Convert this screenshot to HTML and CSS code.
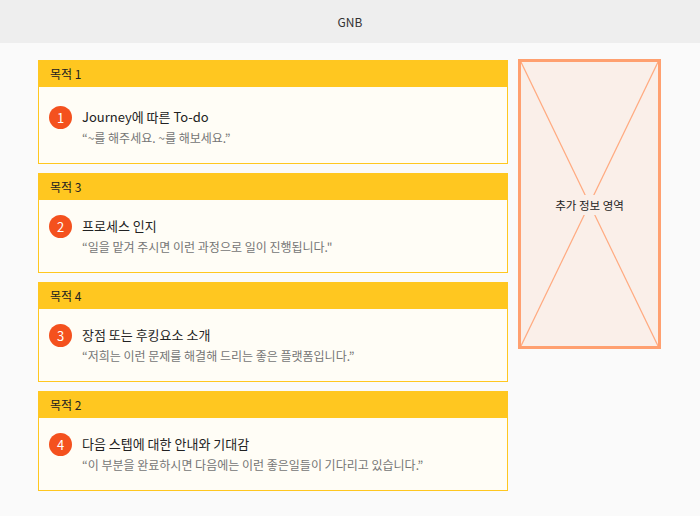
FILE: index.html
```html
<!DOCTYPE html>
<html>
<head>
    <title>Journey</title>
    <link rel="stylesheet" href="styles.css">
</head>
<body>
    <div class="gnb">GNB</div>

    <div class="container">
        <div class="list">
            <div class="card first">
                <div class="card-head">목적 1</div>
                <div class="card-body">
                    <span class="num">1</span>
                    <div class="text">
                        <div class="title">Journey에 따른 To-do</div>
                        <div class="desc">“~를 해주세요. ~를 해보세요.”</div>
                    </div>
                </div>
            </div>
            <div class="card">
                <div class="card-head">목적 3</div>
                <div class="card-body">
                    <span class="num">2</span>
                    <div class="text">
                        <div class="title">프로세스 인지</div>
                        <div class="desc">“일을 맡겨 주시면 이런 과정으로 일이 진행됩니다."</div>
                    </div>
                </div>
            </div>
            <div class="card">
                <div class="card-head">목적 4</div>
                <div class="card-body">
                    <span class="num">3</span>
                    <div class="text">
                        <div class="title">장점 또는 후킹요소 소개</div>
                        <div class="desc">“저희는 이런 문제를 해결해 드리는 좋은 플랫폼입니다.”</div>
                    </div>
                </div>
            </div>
            <div class="card">
                <div class="card-head">목적 2</div>
                <div class="card-body">
                    <span class="num">4</span>
                    <div class="text">
                        <div class="title">다음 스텝에 대한 안내와 기대감</div>
                        <div class="desc">“이 부분을 완료하시면 다음에는 이런 좋은일들이 기다리고 있습니다.”</div>
                    </div>
                </div>
            </div>
        </div>

        <div class="side">
            <svg class="cross" viewBox="0 0 100 100" preserveAspectRatio="none">
                <line x1="0" y1="0" x2="100" y2="100" />
                <line x1="100" y1="0" x2="0" y2="100" />
            </svg>
            <span class="side-label">추가 정보 영역</span>
        </div>
    </div>
</body>
</html>
```

FILE: styles.css
```css
body { margin: 0; background: #fafafa; font-family: "Noto Sans CJK KR", "Noto Sans", sans-serif; color: #222; }

.gnb { height: 43px; line-height: 43px; background: #eeeeee; text-align: center; font-size: 12px; color: #333; }

.container { display: flex; align-items: flex-start; gap: 10px; padding: 17px 0 0 38px; }
.list { width: 470px; display: flex; flex-direction: column; gap: 9px; }

.card { border: 1px solid #ffc720; border-top: none; background: #fffdf6; }
.card-head { height: 27px; line-height: 27px; background: #ffc720; padding: 0 12px; font-size: 12px; margin: 0 -1px; }
.card-body { display: flex; align-items: flex-start; gap: 10px; padding: 15px 10px 15px; }
.card.first .card-body { padding-top: 19px; }

.num { flex: none; width: 23px; height: 23px; border-radius: 50%; background: #f4511e; color: #fff; font-size: 13px; line-height: 23px; text-align: center; }
.text { margin-top: 1px; }
.title { font-size: 13px; line-height: 20px; }
.desc { font-size: 12px; line-height: 20px; margin-top: 1px; color: #757575; }

.side { position: relative; width: 137px; height: 284px; border: 3px solid #ffa070; background: #faefe9; display: flex; align-items: center; justify-content: center; margin-top: -1px; }
.cross { position: absolute; top: 0; left: 0; width: 100%; height: 100%; }
.cross line { stroke: #ffaa80; stroke-width: 1.2; vector-effect: non-scaling-stroke; }
.side-label { position: relative; background: #faefe9; font-size: 11.5px; padding: 2px 3px; margin-top: 1px; color: #222; }
```
